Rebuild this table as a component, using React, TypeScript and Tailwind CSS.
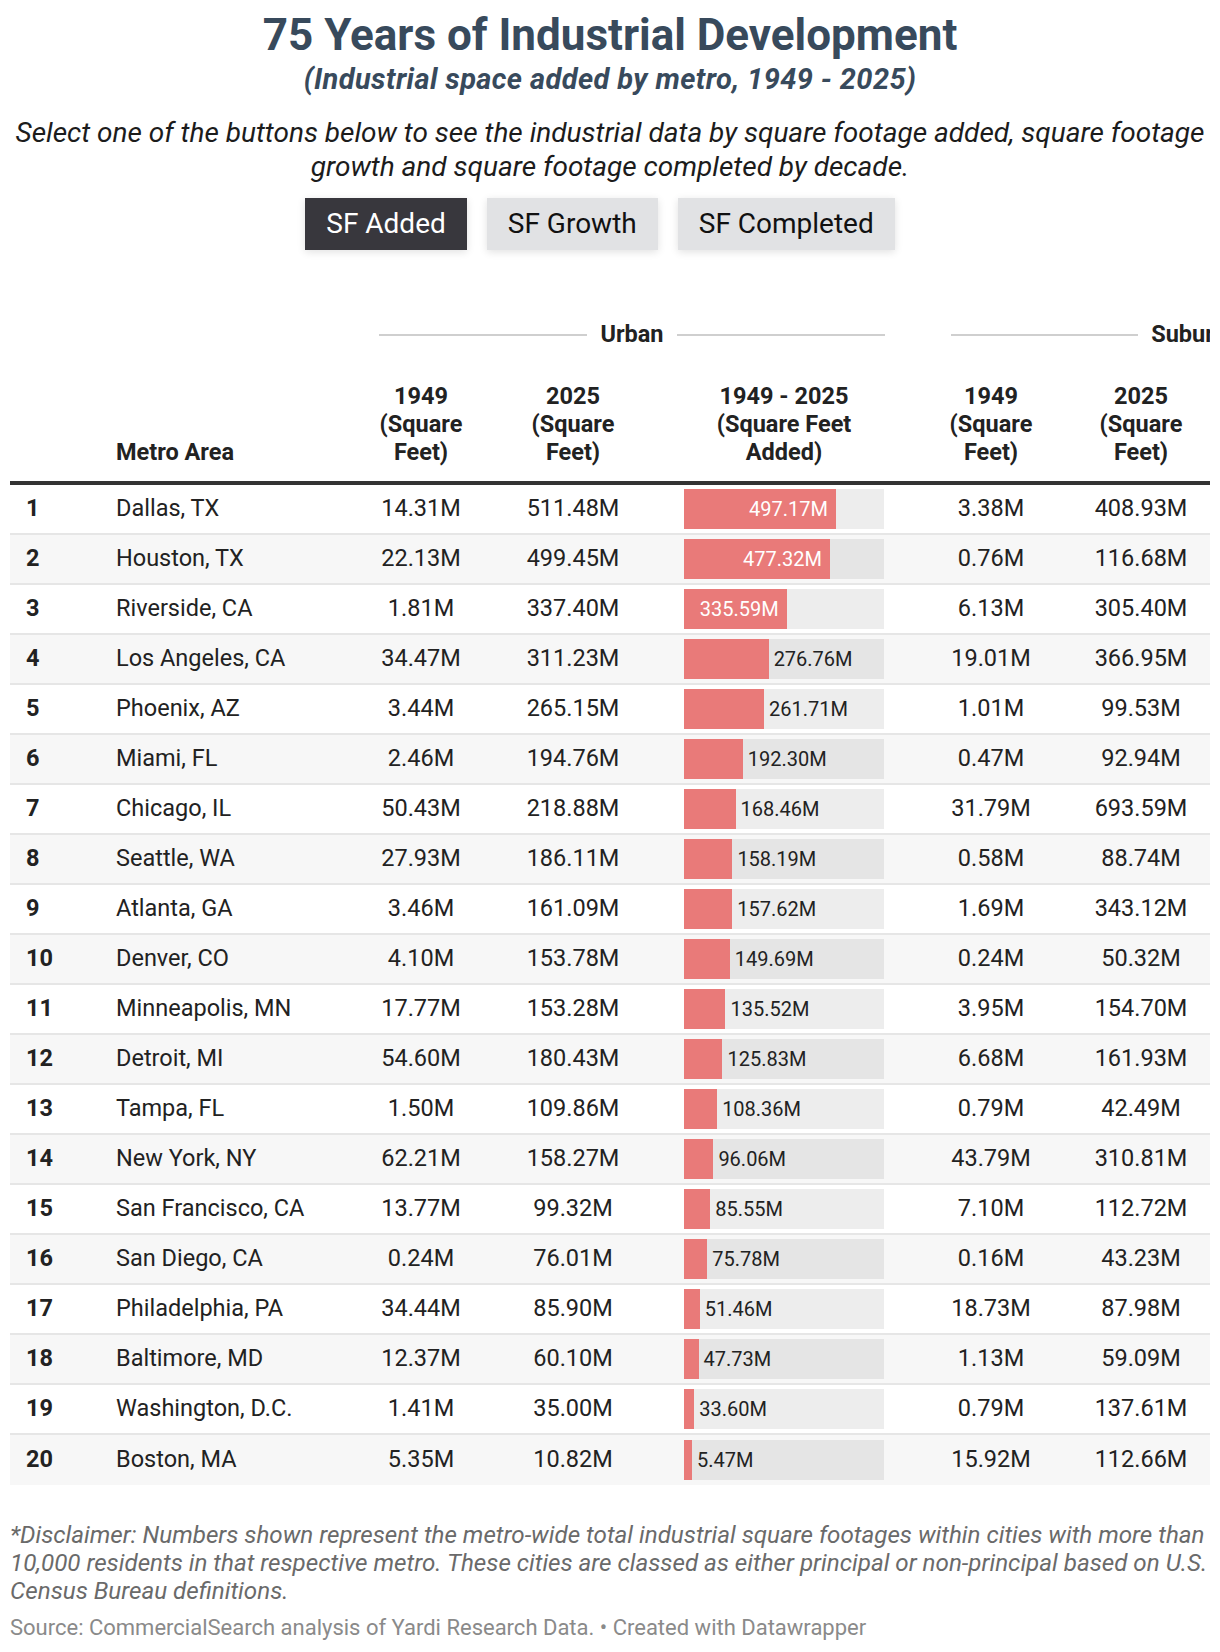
import React from "react";

type Row = {
  rank: number;
  metro: string;
  u1949: string;
  u2025: string;
  added: number;
  s1949: string;
  s2025: string;
};

const rows: Row[] = [
  { rank: 1, metro: "Dallas, TX", u1949: "14.31M", u2025: "511.48M", added: 497.17, s1949: "3.38M", s2025: "408.93M" },
  { rank: 2, metro: "Houston, TX", u1949: "22.13M", u2025: "499.45M", added: 477.32, s1949: "0.76M", s2025: "116.68M" },
  { rank: 3, metro: "Riverside, CA", u1949: "1.81M", u2025: "337.40M", added: 335.59, s1949: "6.13M", s2025: "305.40M" },
  { rank: 4, metro: "Los Angeles, CA", u1949: "34.47M", u2025: "311.23M", added: 276.76, s1949: "19.01M", s2025: "366.95M" },
  { rank: 5, metro: "Phoenix, AZ", u1949: "3.44M", u2025: "265.15M", added: 261.71, s1949: "1.01M", s2025: "99.53M" },
  { rank: 6, metro: "Miami, FL", u1949: "2.46M", u2025: "194.76M", added: 192.3, s1949: "0.47M", s2025: "92.94M" },
  { rank: 7, metro: "Chicago, IL", u1949: "50.43M", u2025: "218.88M", added: 168.46, s1949: "31.79M", s2025: "693.59M" },
  { rank: 8, metro: "Seattle, WA", u1949: "27.93M", u2025: "186.11M", added: 158.19, s1949: "0.58M", s2025: "88.74M" },
  { rank: 9, metro: "Atlanta, GA", u1949: "3.46M", u2025: "161.09M", added: 157.62, s1949: "1.69M", s2025: "343.12M" },
  { rank: 10, metro: "Denver, CO", u1949: "4.10M", u2025: "153.78M", added: 149.69, s1949: "0.24M", s2025: "50.32M" },
  { rank: 11, metro: "Minneapolis, MN", u1949: "17.77M", u2025: "153.28M", added: 135.52, s1949: "3.95M", s2025: "154.70M" },
  { rank: 12, metro: "Detroit, MI", u1949: "54.60M", u2025: "180.43M", added: 125.83, s1949: "6.68M", s2025: "161.93M" },
  { rank: 13, metro: "Tampa, FL", u1949: "1.50M", u2025: "109.86M", added: 108.36, s1949: "0.79M", s2025: "42.49M" },
  { rank: 14, metro: "New York, NY", u1949: "62.21M", u2025: "158.27M", added: 96.06, s1949: "43.79M", s2025: "310.81M" },
  { rank: 15, metro: "San Francisco, CA", u1949: "13.77M", u2025: "99.32M", added: 85.55, s1949: "7.10M", s2025: "112.72M" },
  { rank: 16, metro: "San Diego, CA", u1949: "0.24M", u2025: "76.01M", added: 75.78, s1949: "0.16M", s2025: "43.23M" },
  { rank: 17, metro: "Philadelphia, PA", u1949: "34.44M", u2025: "85.90M", added: 51.46, s1949: "18.73M", s2025: "87.98M" },
  { rank: 18, metro: "Baltimore, MD", u1949: "12.37M", u2025: "60.10M", added: 47.73, s1949: "1.13M", s2025: "59.09M" },
  { rank: 19, metro: "Washington, D.C.", u1949: "1.41M", u2025: "35.00M", added: 33.6, s1949: "0.79M", s2025: "137.61M" },
  { rank: 20, metro: "Boston, MA", u1949: "5.35M", u2025: "10.82M", added: 5.47, s1949: "15.92M", s2025: "112.66M" },
];

const MAX = 654;
const COLS = "grid grid-cols-[96px_240px_150px_154px_268px_146px_154px_268px] w-[1476px]";

const Bar = ({ value, even }: { value: number; even: boolean }) => {
  const w = (value / MAX) * 200;
  const inside = w > 95;
  const label = `${value.toFixed(2)}M`;
  return (
    <div className="flex justify-center">
      <div className={`flex h-[40px] w-[200px] items-center ${even ? "bg-[#e5e5e5]" : "bg-[#ededed]"}`}>
        <div
          className="flex h-full shrink-0 items-center justify-end bg-[#e97a79] pr-[8px] text-white"
          style={{ width: w }}
        >
          {inside && label}
        </div>
        {!inside && <span className="pl-[5px] text-[#222]">{label}</span>}
      </div>
    </div>
  );
};

const Spanner = ({ label }: { label: string }) => (
  <div className="flex items-center gap-[13px] px-[33px]">
    <div className="h-[2px] flex-1 bg-[#cfcfcf]" />
    <span className="font-bold">{label}</span>
    <div className="h-[2px] flex-1 bg-[#cfcfcf]" />
  </div>
);

export default function App() {
  return (
    <div className="bg-white px-[10px] pt-[10px] font-[Roboto,Arial,sans-serif] text-[#222]">
      <h1 className="text-center text-[44px] font-bold leading-[50px] text-[#384a5c]">
        75 Years of Industrial Development
      </h1>
      <p className="mt-[3px] text-center text-[29px] font-bold italic leading-[32px] tracking-[0.4px] text-[#384a5c]">
        (Industrial space added by metro, 1949 - 2025)
      </p>
      <p className="mt-[21px] text-center text-[28px] italic leading-[34px] text-[#1c1c1c]">
        Select one of the buttons below to see the industrial data by square footage added, square footage
        growth and square footage completed by decade.
      </p>
      <div className="mt-[14px] flex justify-center text-[28px]">
        <button className="mr-[20px] h-[52px] bg-[#38373d] px-[21px] text-white shadow-[0_2px_8px_rgba(0,0,0,0.12)]">
          SF Added
        </button>
        <button className="mr-[20px] h-[52px] bg-[#e1e2e4] px-[21px] text-[#111] shadow-[0_2px_8px_rgba(0,0,0,0.12)]">
          SF Growth
        </button>
        <button className="mr-[20px] h-[52px] bg-[#e1e2e4] px-[21px] text-[#111] shadow-[0_2px_8px_rgba(0,0,0,0.12)]">
          SF Completed
        </button>
      </div>

      <div className="mt-[65px] w-[1200px] overflow-hidden text-[23.5px]">
        <div className={`${COLS} h-[40px] items-center`}>
          <div className="col-span-2" />
          <div className="col-span-3">
            <Spanner label="Urban" />
          </div>
          <div className="col-span-3">
            <Spanner label="Suburban" />
          </div>
        </div>

        <div className={`${COLS} h-[126px] items-end pb-[15px] font-bold leading-[28px]`}>
          <div />
          <div className="pl-[10px]">Metro Area</div>
          <div className="px-[20px] text-center">1949 (Square Feet)</div>
          <div className="px-[24px] text-center">2025 (Square Feet)</div>
          <div className="px-[30px] text-center">1949 - 2025 (Square Feet Added)</div>
          <div className="px-[20px] text-center">1949 (Square Feet)</div>
          <div className="px-[24px] text-center">2025 (Square Feet)</div>
          <div className="px-[30px] text-center">1949 - 2025 (Square Feet Added)</div>
        </div>
        <div className="h-[4px] w-[1476px] bg-[#333]" />

        {rows.map((r, i) => {
          const even = i % 2 === 1;
          const last = i === rows.length - 1;
          const sub = parseFloat(r.s2025) - parseFloat(r.s1949);
          return (
            <div
              key={r.rank}
              className={`${COLS} h-[50px] items-center ${even ? "bg-[#f7f7f7]" : "bg-white"} ${
                last ? "" : "border-b-2 border-[#e6e6e6]"
              }`}
            >
              <div className="pl-[16px] font-bold">{r.rank}</div>
              <div className="pl-[10px]">{r.metro}</div>
              <div className="text-center">{r.u1949}</div>
              <div className="text-center">{r.u2025}</div>
              <div className="text-[20px]">
                <Bar value={r.added} even={even} />
              </div>
              <div className="text-center">{r.s1949}</div>
              <div className="text-center">{r.s2025}</div>
              <div className="text-[20px]">
                <Bar value={sub} even={even} />
              </div>
            </div>
          );
        })}
      </div>

      <p className="mt-[36px] text-[24.2px] italic leading-[28px] text-[#6a6a6a]">
        *Disclaimer: Numbers shown represent the metro-wide total industrial square footages within cities with more than
        10,000 residents in that respective metro. These cities are classed as either principal or non-principal based on
        U.S. Census Bureau definitions.
      </p>
      <p className="mt-[9px] pb-[10px] text-[22px] leading-[28px] text-[#8a8a8a]">
        Source: CommercialSearch analysis of Yardi Research Data. • Created with Datawrapper
      </p>
    </div>
  );
}
